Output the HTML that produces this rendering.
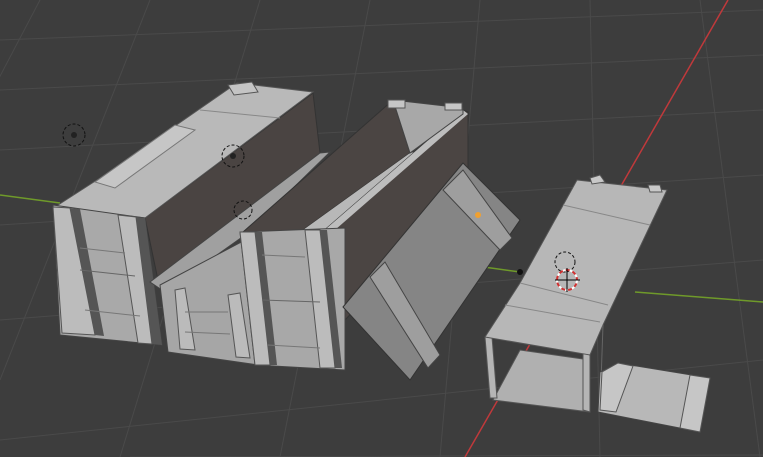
<!DOCTYPE html>
<html><head><meta charset="utf-8"><style>
html,body{margin:0;padding:0;background:#3d3d3d;overflow:hidden}
svg{display:block}
</style></head><body>
<svg width="763" height="457" viewBox="0 0 763 457" xmlns="http://www.w3.org/2000/svg">
<rect width="763" height="457" fill="#3d3d3d"/>
<g stroke="#4a4a4a" stroke-width="1" fill="none">
<path d="M0,40 L763,10 M0,90 L763,55 M0,150 L763,110 M0,225 L763,175 M0,320 L763,260 M0,440 L763,360 M130,457 L763,455"/>
<path d="M40,0 L-200,457 M150,0 L0,380 M260,0 L120,457 M370,0 L280,457 M480,0 L440,457 M590,0 L600,457 M700,0 L760,457"/>
</g>
<line x1="728" y1="0" x2="465" y2="457" stroke="#c0393b" stroke-width="1.5"/>
<line x1="0" y1="195" x2="60" y2="203" stroke="#6f9a2a" stroke-width="1.5"/>
<line x1="455" y1="263" x2="520" y2="272" stroke="#6f9a2a" stroke-width="1.5"/>
<line x1="635" y1="292" x2="763" y2="302" stroke="#6f9a2a" stroke-width="1.5"/>

<!-- left big crate -->
<polygon points="145,218 313,93 320,153 158,280" fill="#4a4442" stroke="#333"/>
<polygon points="55,207 100,178 237,83 313,92 145,218" fill="#b9b9b9" stroke="#555"/>
<polygon points="95,182 175,125 195,130 115,188" fill="#c6c6c6" stroke="#777"/>
<line x1="200" y1="110" x2="280" y2="118" stroke="#888"/>
<polygon points="53,205 145,218 162,345 60,335" fill="#a9a9a9" stroke="#444"/>
<polygon points="53,207 70,208 95,335 62,333" fill="#bcbcbc" stroke="#555"/>
<polygon points="70,208 80,209 104,336 95,335" fill="#555"/>
<polygon points="118,215 136,217 152,344 138,343" fill="#bcbcbc" stroke="#555"/>
<polygon points="136,217 145,218 162,345 152,344" fill="#555"/>
<line x1="80" y1="248" x2="125" y2="253" stroke="#777"/>
<line x1="80" y1="270" x2="135" y2="276" stroke="#666"/>
<line x1="85" y1="310" x2="140" y2="316" stroke="#777"/>
<polygon points="228,85 252,82 258,92 234,95" fill="#c4c4c4" stroke="#555"/>

<!-- strip between crates -->
<polygon points="150,282 320,153 330,152 245,235 165,292" fill="#a0a0a0" stroke="#444"/>

<!-- small middle-left crate -->
<polygon points="160,285 245,240 258,240 258,365 168,352" fill="#a6a6a6" stroke="#444"/>
<polygon points="175,290 185,288 195,350 180,349" fill="#bbb" stroke="#555"/>
<polygon points="228,295 240,293 250,358 236,357" fill="#bbb" stroke="#555"/>
<line x1="185" y1="312" x2="228" y2="312" stroke="#777"/>
<line x1="185" y1="332" x2="230" y2="334" stroke="#777"/>

<!-- middle open crate -->
<polygon points="243,232 393,100 410,153 285,243" fill="#4b4543" stroke="#333"/>
<polygon points="285,243 410,153 425,150 305,247" fill="#b8b8b8"/>
<polygon points="345,232 305,247 463,110 468,112 468,190 345,320" fill="#4b4543" stroke="#333"/>
<polygon points="305,247 463,110 468,114 312,250" fill="#bdbdbd"/>
<polygon points="393,100 463,108 463,114 410,153" fill="#a8a8a8" stroke="#444"/>
<polygon points="240,232 345,228 345,370 255,365" fill="#a8a8a8" stroke="#444"/>
<polygon points="240,232 255,232 270,365 255,365" fill="#bcbcbc" stroke="#555"/>
<polygon points="255,232 262,232 277,365 270,365" fill="#555"/>
<polygon points="305,230 320,230 335,368 320,368" fill="#bcbcbc" stroke="#555"/>
<polygon points="320,230 327,230 342,368 335,368" fill="#555"/>
<line x1="262" y1="255" x2="305" y2="257" stroke="#777"/>
<line x1="262" y1="300" x2="320" y2="302" stroke="#666"/>
<line x1="268" y1="345" x2="320" y2="348" stroke="#777"/>
<polygon points="388,100 405,100 405,108 388,108" fill="#c6c6c6" stroke="#555"/>
<polygon points="445,103 462,103 462,110 445,110" fill="#c6c6c6" stroke="#555"/>

<!-- leaning lid -->
<polygon points="343,307 463,163 520,220 410,380" fill="#858585" stroke="#333"/>
<polygon points="370,277 385,262 440,355 428,368" fill="#9e9e9e" stroke="#444"/>
<polygon points="443,190 463,170 512,238 500,250" fill="#9e9e9e" stroke="#444"/>
<circle cx="478" cy="215" r="3" fill="#f0a030"/>

<!-- right crate -->
<polygon points="493,400 520,350 590,360 590,412" fill="#b0b0b0" stroke="#555"/>
<polygon points="485,337 492,337 497,398 490,398" fill="#b5b5b5" stroke="#555"/>
<polygon points="583,352 590,355 590,412 583,410" fill="#b5b5b5" stroke="#555"/>
<polygon points="577,180 667,190 603,325 590,355 485,337 520,283" fill="#b7b7b7" stroke="#555"/>
<line x1="563" y1="205" x2="650" y2="225" stroke="#888"/>
<line x1="520" y1="283" x2="608" y2="305" stroke="#888"/>
<line x1="505" y1="305" x2="600" y2="322" stroke="#888"/>
<line x1="603" y1="325" x2="600" y2="410" stroke="#666"/>
<polygon points="590,178 600,175 605,182 592,184" fill="#c8c8c8" stroke="#555"/>
<polygon points="648,185 660,185 662,192 650,192" fill="#c8c8c8" stroke="#555"/>
<!-- loose piece -->
<polygon points="600,372 618,363 710,378 700,432 598,412" fill="#b8b8b8" stroke="#444"/>
<polygon points="602,372 618,363 633,366 616,412 600,410" fill="#c6c6c6" stroke="#555"/>
<polygon points="690,375 710,378 700,432 680,428" fill="#c6c6c6" stroke="#555"/>

<!-- empties / lights -->
<g fill="none" stroke="#111" stroke-dasharray="3,2">
<circle cx="74" cy="135" r="11"/><circle cx="233" cy="156" r="11"/><circle cx="243" cy="210" r="9"/><circle cx="565" cy="262" r="10"/>
</g>
<circle cx="74" cy="135" r="3" fill="#222"/><circle cx="233" cy="156" r="3" fill="#222"/>
<circle cx="567" cy="280" r="10" fill="none" stroke="#fff" stroke-width="2" stroke-dasharray="4,3"/>
<circle cx="567" cy="280" r="10" fill="none" stroke="#d03030" stroke-width="2" stroke-dasharray="4,3" stroke-dashoffset="3.5"/>
<line x1="555" y1="280" x2="580" y2="280" stroke="#000"/><line x1="567" y1="268" x2="567" y2="292" stroke="#000"/>
<circle cx="520" cy="272" r="3" fill="#111"/>
</svg>
</body></html>
